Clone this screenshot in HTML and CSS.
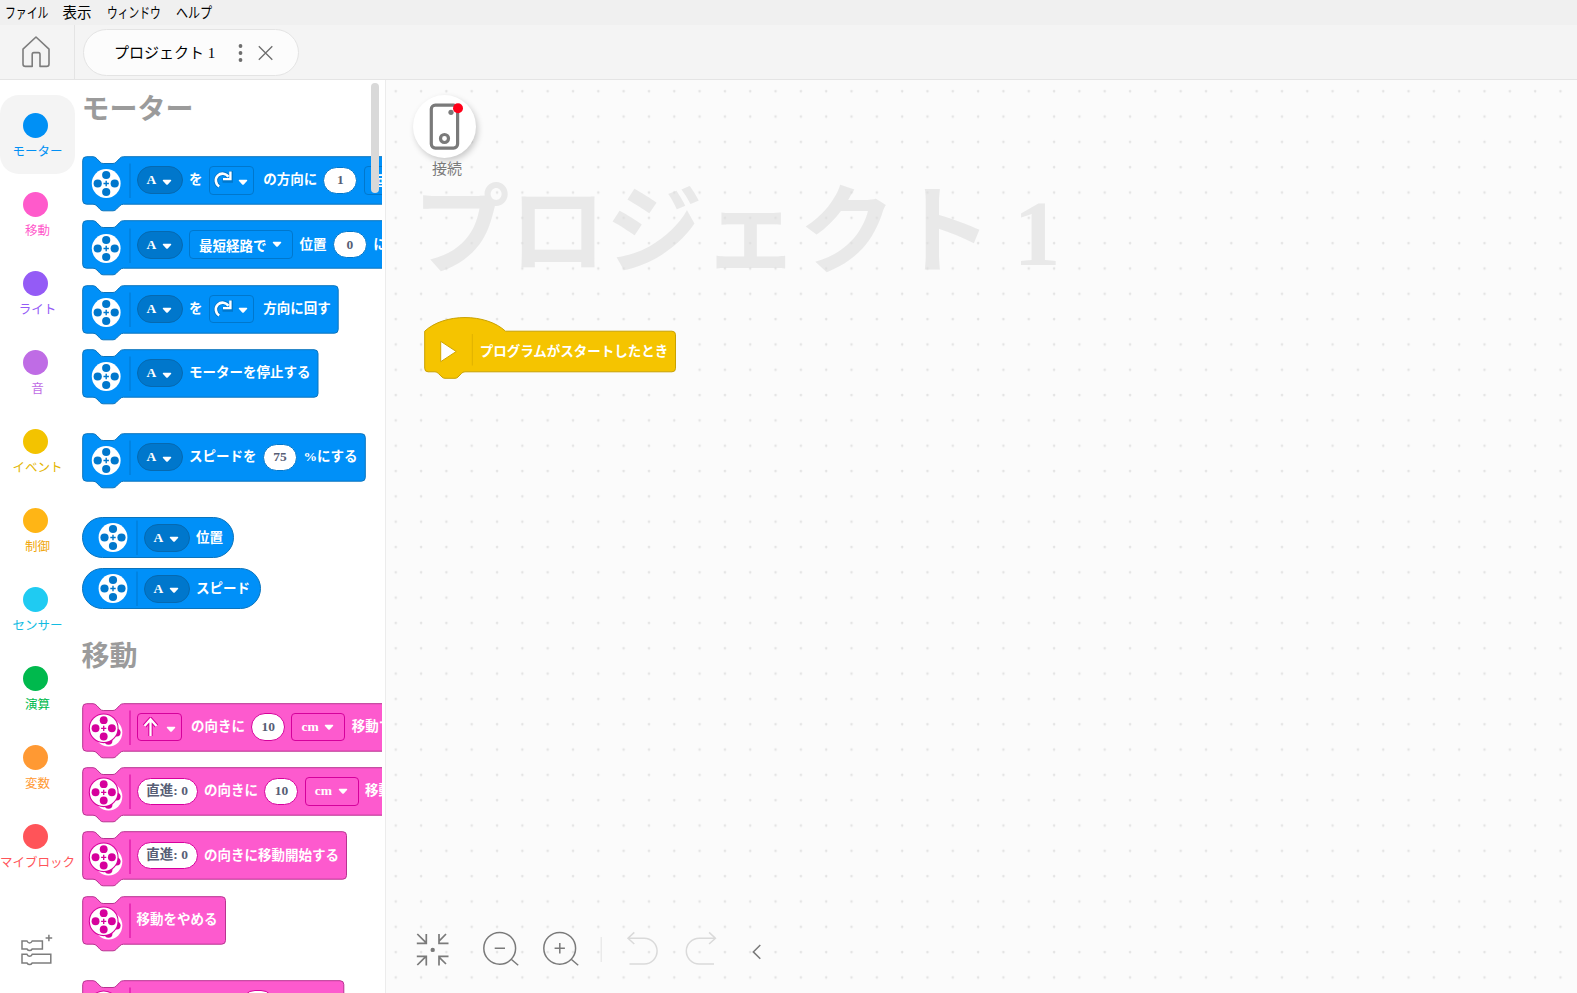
FILE: index.html
```html
<!DOCTYPE html>
<html lang="ja">
<head>
<meta charset="utf-8">
<title>プロジェクト 1</title>
<link rel="stylesheet" href="styles.css">
</head>
<body>
<svg class="defs" width="0" height="0">
  <defs>
    <g id="wheel">
      <circle r="14.4" class="disc"/>
      <circle cy="-8.5" r="4.1"/><circle cy="8.5" r="4.1"/><circle cx="-8.5" r="4.1"/><circle cx="8.5" r="4.1"/>
      <path d="M-2.7 0H2.7M0-2.7V2.7" class="cross"/>
    </g>
    <symbol id="motor" viewBox="0 0 55 48">
      <use href="#wheel" x="24.2" y="27.5"/>
      <path d="M48 7.5V42" class="sep"/>
    </symbol>
    <symbol id="motor-round" viewBox="0 0 62 41">
      <use href="#wheel" x="31" y="20.5"/>
      <path d="M55 3.5V38" class="sep"/>
    </symbol>
    <symbol id="drive" viewBox="0 0 55 48">
      <g transform="translate(26.5 29.6) scale(.96)"><use href="#wheel"/></g>
      <circle cx="21.7" cy="25.3" r="14.9" class="halo"/>
      <g transform="translate(21.7 25.3) scale(.96)"><use href="#wheel"/></g>
      <path d="M48 7.5V42" class="sep"/>
    </symbol>
    <symbol id="caret" viewBox="0 0 10 7">
      <path d="M1.3 .8H8.7Q9.8 1 9 2L6 5.3Q5 6.3 4 5.3L1 2Q.2 1 1.3.8Z" fill="#fff"/>
    </symbol>
    <symbol id="turn" viewBox="0 0 20 20">
      <path d="M6.2 16.3A6.8 6.8 0 1 1 15.4 6.8M18.3 1V10.6H9.5" class="arrow-edge"/>
      <path d="M6.2 16.3A6.8 6.8 0 1 1 15.4 6.8" fill="none" stroke="#fff" stroke-width="2.6"/>
      <path d="M18.6 1.6V10.2H10V7.9H16.2V1.6Z" fill="#fff"/>
    </symbol>
    <symbol id="up" viewBox="0 0 20 20">
      <path d="M9.5 19V2.5M3.5 9L9.5 2.2L15.5 9" class="arrow-edge"/>
      <path d="M9.5 19V2.5M3.5 9L9.5 2.2L15.5 9" fill="none" stroke="#fff" stroke-width="2.3"/>
    </symbol>
  </defs>
</svg>

<nav class="menubar">
  <span class="menu m1"><i>ファイル</i></span><span class="menu m2"><i>表示</i></span><span class="menu m3"><i>ウィンドウ</i></span><span class="menu m4"><i>ヘルプ</i></span>
</nav>

<header class="tabs">
  <div class="home">
    <svg width="30" height="34" viewBox="0 0 30 34" fill="none" stroke="#7d7d7d" stroke-width="1.6" stroke-linejoin="round"><path d="M2 14.2L15 2L28 14.2V29Q28 31.4 25.6 31.4H19V19.5Q19 17.6 17.4 17.6H12.8Q11.2 17.6 11.2 19.5V31.4H4.4Q2 31.4 2 29Z"/></svg>
  </div>
  <div class="tab">
    <span class="tab-name">プロジェクト 1</span>
    <svg width="36" height="20" viewBox="0 0 36 20"><g fill="#6e6e6e"><circle cx="3.5" cy="3" r="1.9"/><circle cx="3.5" cy="10" r="1.9"/><circle cx="3.5" cy="17" r="1.9"/></g><path d="M21.8 3.2L35.3 16.8M35.3 3.2L21.8 16.8" stroke="#6e6e6e" stroke-width="1.3"/></svg>
  </div>
</header>

<main class="main">
  <aside class="categories">
    <div class="cat active c-motor"><b></b><span>モーター</span></div>
    <div class="cat c-move"><b></b><span>移動</span></div>
    <div class="cat c-light"><b></b><span>ライト</span></div>
    <div class="cat c-sound"><b></b><span>音</span></div>
    <div class="cat c-event"><b></b><span>イベント</span></div>
    <div class="cat c-control"><b></b><span>制御</span></div>
    <div class="cat c-sensor"><b></b><span>センサー</span></div>
    <div class="cat c-ops"><b></b><span>演算</span></div>
    <div class="cat c-vars"><b></b><span>変数</span></div>
    <div class="cat c-my"><b></b><span>マイブロック</span></div>
    <svg class="extend" width="34" height="34" viewBox="0 0 34 34" fill="none" stroke="#7d7d7d" stroke-width="1.5"><path d="M2 6H7Q8 8 9.6 8Q11.2 8 12.2 6H22.4V14H12.2Q11.2 15.6 9.6 15.6Q8 15.6 7 14H2ZM2 19.3H7Q8 21.2 9.6 21.2Q11.2 21.2 12.2 19.3H30.8V28H12.2Q11.2 29.6 9.6 29.6Q8 29.6 7 28H2ZM25.6 3H32.2M28.9-.3V6.3"/></svg>
  </aside>

  <section class="palette">
    <h2 class="first">モーター</h2>
    <div class="stack motor">
      <div class="block w-long">
        <svg class="shape" width="340" height="56"><path d="M.7 4.5Q.7 .7 4.5 .7H11Q13.3.8 15 2.8L18 6Q19.3 7.5 21.2 7.5H31Q33 7.5 34.3 6L37.5 2.6Q39 .7 41.5 .7H336V48.2H41.5Q39.2 48.2 37.5 50L34.3 53.3Q33 54.8 31 54.8H21.2Q19.3 54.8 18 53.3L15 50Q13.3 48.2 11 48.2H4.5Q.7 48.2 .7 44.5Z"/></svg>
        <svg width="55" height="48"><use href="#motor"/></svg>
        <span class="pill">A<svg width="10" height="7"><use href="#caret"/></svg></span>
        <span class="txt">を</span>
        <span class="drop icon"><svg width="20" height="20"><use href="#turn"/></svg><svg width="10" height="7"><use href="#caret"/></svg></span>
        <span class="txt wide">の方向に</span>
        <span class="num">1</span>
        <span class="drop">回転<svg width="10" height="7"><use href="#caret"/></svg></span>
      </div>
      <div class="block w-long">
        <svg class="shape" width="340" height="56"><path d="M.7 4.5Q.7 .7 4.5 .7H11Q13.3.8 15 2.8L18 6Q19.3 7.5 21.2 7.5H31Q33 7.5 34.3 6L37.5 2.6Q39 .7 41.5 .7H336V48.2H41.5Q39.2 48.2 37.5 50L34.3 53.3Q33 54.8 31 54.8H21.2Q19.3 54.8 18 53.3L15 50Q13.3 48.2 11 48.2H4.5Q.7 48.2 .7 44.5Z"/></svg>
        <svg width="55" height="48"><use href="#motor"/></svg>
        <span class="pill">A<svg width="10" height="7"><use href="#caret"/></svg></span>
        <span class="drop">最短経路で<svg width="10" height="7"><use href="#caret"/></svg></span>
        <span class="txt">位置</span>
        <span class="num">0</span>
        <span class="txt">にする</span>
      </div>
      <div class="block">
        <svg class="shape" width="260" height="56"><path d="M.7 4.5Q.7 .7 4.5 .7H11Q13.3.8 15 2.8L18 6Q19.3 7.5 21.2 7.5H31Q33 7.5 34.3 6L37.5 2.6Q39 .7 41.5 .7H252.5Q256.2 .7 256.2 4.5V44.5Q256.2 48.2 252.5 48.2H41.5Q39.2 48.2 37.5 50L34.3 53.3Q33 54.8 31 54.8H21.2Q19.3 54.8 18 53.3L15 50Q13.3 48.2 11 48.2H4.5Q.7 48.2 .7 44.5Z"/></svg>
        <svg width="55" height="48"><use href="#motor"/></svg>
        <span class="pill">A<svg width="10" height="7"><use href="#caret"/></svg></span>
        <span class="txt">を</span>
        <span class="drop icon"><svg width="20" height="20"><use href="#turn"/></svg><svg width="10" height="7"><use href="#caret"/></svg></span>
        <span class="txt wide">方向に回す</span>
      </div>
      <div class="block">
        <svg class="shape" width="240" height="56"><path d="M.7 4.5Q.7 .7 4.5 .7H11Q13.3.8 15 2.8L18 6Q19.3 7.5 21.2 7.5H31Q33 7.5 34.3 6L37.5 2.6Q39 .7 41.5 .7H232.2Q236 .7 236 4.5V44.5Q236 48.2 232.2 48.2H41.5Q39.2 48.2 37.5 50L34.3 53.3Q33 54.8 31 54.8H21.2Q19.3 54.8 18 53.3L15 50Q13.3 48.2 11 48.2H4.5Q.7 48.2 .7 44.5Z"/></svg>
        <svg width="55" height="48"><use href="#motor"/></svg>
        <span class="pill">A<svg width="10" height="7"><use href="#caret"/></svg></span>
        <span class="txt">モーターを停止する</span>
      </div>
      <div class="block spaced">
        <svg class="shape" width="290" height="56"><path d="M.7 4.5Q.7 .7 4.5 .7H11Q13.3.8 15 2.8L18 6Q19.3 7.5 21.2 7.5H31Q33 7.5 34.3 6L37.5 2.6Q39 .7 41.5 .7H279.5Q283.3 .7 283.3 4.5V44.5Q283.3 48.2 279.5 48.2H41.5Q39.2 48.2 37.5 50L34.3 53.3Q33 54.8 31 54.8H21.2Q19.3 54.8 18 53.3L15 50Q13.3 48.2 11 48.2H4.5Q.7 48.2 .7 44.5Z"/></svg>
        <svg width="55" height="48"><use href="#motor"/></svg>
        <span class="pill">A<svg width="10" height="7"><use href="#caret"/></svg></span>
        <span class="txt">スピードを</span>
        <span class="num">75</span>
        <span class="txt">%にする</span>
      </div>
      <div class="reporter r1">
        <svg width="62" height="41"><use href="#motor-round"/></svg>
        <span class="pill">A<svg width="10" height="7"><use href="#caret"/></svg></span>
        <span class="txt">位置</span>
      </div>
      <div class="reporter r2">
        <svg width="62" height="41"><use href="#motor-round"/></svg>
        <span class="pill">A<svg width="10" height="7"><use href="#caret"/></svg></span>
        <span class="txt">スピード</span>
      </div>
    </div>

    <h2>移動</h2>
    <div class="stack move">
      <div class="block w-long">
        <svg class="shape" width="340" height="56"><path d="M.7 4.5Q.7 .7 4.5 .7H11Q13.3.8 15 2.8L18 6Q19.3 7.5 21.2 7.5H31Q33 7.5 34.3 6L37.5 2.6Q39 .7 41.5 .7H336V48.2H41.5Q39.2 48.2 37.5 50L34.3 53.3Q33 54.8 31 54.8H21.2Q19.3 54.8 18 53.3L15 50Q13.3 48.2 11 48.2H4.5Q.7 48.2 .7 44.5Z"/></svg>
        <svg width="55" height="48"><use href="#drive"/></svg>
        <span class="drop icon"><svg width="20" height="20"><use href="#up"/></svg><svg width="10" height="7"><use href="#caret"/></svg></span>
        <span class="txt wide">の向きに</span>
        <span class="num">10</span>
        <span class="drop">cm<svg width="10" height="7"><use href="#caret"/></svg></span>
        <span class="txt">移動する</span>
      </div>
      <div class="block w-long">
        <svg class="shape" width="340" height="56"><path d="M.7 4.5Q.7 .7 4.5 .7H11Q13.3.8 15 2.8L18 6Q19.3 7.5 21.2 7.5H31Q33 7.5 34.3 6L37.5 2.6Q39 .7 41.5 .7H336V48.2H41.5Q39.2 48.2 37.5 50L34.3 53.3Q33 54.8 31 54.8H21.2Q19.3 54.8 18 53.3L15 50Q13.3 48.2 11 48.2H4.5Q.7 48.2 .7 44.5Z"/></svg>
        <svg width="55" height="48"><use href="#drive"/></svg>
        <span class="num steer">直進: 0</span>
        <span class="txt">の向きに</span>
        <span class="num">10</span>
        <span class="drop">cm<svg width="10" height="7"><use href="#caret"/></svg></span>
        <span class="txt">移動する</span>
      </div>
      <div class="block">
        <svg class="shape" width="270" height="56"><path d="M.7 4.5Q.7 .7 4.5 .7H11Q13.3.8 15 2.8L18 6Q19.3 7.5 21.2 7.5H31Q33 7.5 34.3 6L37.5 2.6Q39 .7 41.5 .7H260.8Q264.5 .7 264.5 4.5V44.5Q264.5 48.2 260.8 48.2H41.5Q39.2 48.2 37.5 50L34.3 53.3Q33 54.8 31 54.8H21.2Q19.3 54.8 18 53.3L15 50Q13.3 48.2 11 48.2H4.5Q.7 48.2 .7 44.5Z"/></svg>
        <svg width="55" height="48"><use href="#drive"/></svg>
        <span class="num steer">直進: 0</span>
        <span class="txt">の向きに移動開始する</span>
      </div>
      <div class="block">
        <svg class="shape" width="150" height="56"><path d="M.7 4.5Q.7 .7 4.5 .7H11Q13.3.8 15 2.8L18 6Q19.3 7.5 21.2 7.5H31Q33 7.5 34.3 6L37.5 2.6Q39 .7 41.5 .7H139.7Q143.5 .7 143.5 4.5V44.5Q143.5 48.2 139.7 48.2H41.5Q39.2 48.2 37.5 50L34.3 53.3Q33 54.8 31 54.8H21.2Q19.3 54.8 18 53.3L15 50Q13.3 48.2 11 48.2H4.5Q.7 48.2 .7 44.5Z"/></svg>
        <svg width="55" height="48"><use href="#drive"/></svg>
        <span class="txt tight">移動をやめる</span>
      </div>
      <div class="block spaced">
        <svg class="shape" width="270" height="56"><path d="M.7 4.5Q.7 .7 4.5 .7H11Q13.3.8 15 2.8L18 6Q19.3 7.5 21.2 7.5H31Q33 7.5 34.3 6L37.5 2.6Q39 .7 41.5 .7H258Q261.8 .7 261.8 4.5V44.5Q261.8 48.2 258 48.2H41.5Q39.2 48.2 37.5 50L34.3 53.3Q33 54.8 31 54.8H21.2Q19.3 54.8 18 53.3L15 50Q13.3 48.2 11 48.2H4.5Q.7 48.2 .7 44.5Z"/></svg>
        <svg width="55" height="48"><use href="#drive"/></svg>
        <span class="num speed"></span>
      </div>
    </div>
    <div class="scrollbar"></div>
  </section>

  <section class="workspace">
    <div class="title">プロジェクト<span> 1</span></div>
    <svg class="grid" width="1192" height="913">
      <defs><pattern id="dots" x="-3" y="-1.5" width="25.32" height="25.32" patternUnits="userSpaceOnUse"><path d="M11.5 12.7H14M12.75 11.4V14" stroke="#dedede" stroke-width="1"/></pattern></defs>
      <rect width="1192" height="913" fill="url(#dots)"/>
    </svg>
    <div class="connect">
      <div class="hub">
        <svg width="63" height="63" viewBox="0 0 63 63" fill="none" stroke="#7a7a7a"><rect x="18.3" y="10.1" width="26.3" height="43" rx="4" stroke-width="3.2"/><circle cx="31.5" cy="43.5" r="4" stroke-width="3.2"/><circle cx="38" cy="17.3" r="2.6" fill="#7a7a7a" stroke="none"/><circle cx="45" cy="13.2" r="5" fill="#ff0019" stroke="none"/></svg>
      </div>
      <span>接続</span>
    </div>
    <div class="hat">
      <svg class="shape" width="256" height="64"><path d="M.7 14.2C20-4 62-4 81.5 14.2H248Q251.5 14.2 251.5 17.8V51.3Q251.5 54.8 248 54.8H41Q38.8 54.8 37.3 56.6L34 60Q32.8 61.3 31 61.3H21Q19.2 61.3 18 60L14.5 56.6Q13 54.8 11 54.8H4Q.7 54.8 .7 51.3Z" fill="#f5c400" stroke="#c9a100"/><path d="M48.3 17V48.5" stroke="#dfb200"/><path d="M16.7 24.3L32.2 34.5L16.7 44.7Z" fill="#fff" stroke="#d0a600"/></svg>
      <span>プログラムがスタートしたとき</span>
    </div>
    <div class="tools">
      <svg width="350" height="36" viewBox="0 0 350 36" fill="none" stroke="#7a7a7a" stroke-width="1.5">
        <path d="M2.3 4L11 12.7M1.8 13.3H11.3V4M31 4L24.3 10.8M24 4V13.3H33.5M2.3 35L11 26.3M1.8 26.4H11.3V35.5M31 34L24.3 27.3M24 35.5V26.4H33.5" class="fit"/>
        <circle cx="17.7" cy="19.9" r="2.2" fill="#7a7a7a" stroke="none"/>
        <circle cx="84.7" cy="18.3" r="15.9"/><path d="M79.7 18.3H90M96.2 29.3L103.2 35.3"/>
        <circle cx="144.7" cy="18.3" r="15.9"/><path d="M139.6 18.3H149.9M144.8 13.1V23.5M156.2 29.3L163.2 35.3"/>
        <path d="M186.2 7V32" stroke="#e2e2e2" stroke-width="1"/>
        <path d="M213 8.2H229.2A12.9 12.9 0 0 1 229.2 34H214.5M219.3 2.4L213 8.2L219.3 14M300.4 8.2H284.2A12.9 12.9 0 0 0 284.2 34H299M294.1 2.4L300.4 8.2L294.1 14" stroke="#dadada"/>
        <path d="M345.3 15L338.3 21.9L345.3 28.8"/>
      </svg>
    </div>
  </section>
</main>
</body>
</html>
```

FILE: styles.css
```css
* { box-sizing: border-box; }

body {
  margin: 0;
  width: 1577px;
  height: 993px;
  overflow: hidden;
  display: flex;
  flex-direction: column;
  background: #fff;
  font-family: "Liberation Serif", "Noto Sans CJK JP", sans-serif;
}

svg { display: block; flex: none; }
.defs { position: absolute; }

/* Menu bar */
.menubar {
  height: 25px;
  flex: none;
  display: flex;
  align-items: center;
  background: #f0f0f0;
  font: 14.5px/24px "Noto Sans CJK JP", sans-serif;
  color: #000;
  padding: 0 0 1px 4.5px;
}
.menu { white-space: nowrap; flex: none; }
.menu i { display: inline-block; font-style: normal; transform-origin: 0 50%; }
.m1 { width: 58px; }
.m2 { width: 44px; }
.m3 { width: 69.5px; }
.m1 i { transform: scaleX(.75); }
.m3 i { transform: scaleX(.74); }
.m4 i { transform: scaleX(.83); }

/* Project tabs */
.tabs {
  height: 55px;
  flex: none;
  display: flex;
  align-items: center;
  background: #f4f4f4;
  border-bottom: 1px solid #e4e4e4;
}
.home {
  width: 75px;
  height: 54px;
  display: flex;
  align-items: center;
  padding-left: 20.5px;
  border-right: 1px solid #e4e4e4;
}
.tab {
  width: 216px;
  height: 47px;
  margin-left: 8px;
  padding: 1px 0 0 30px;
  display: flex;
  align-items: center;
  background: #fcfcfc;
  border: 1px solid #e4e4e4;
  border-radius: 24px;
}
.tab-name { width: 122.5px; font-size: 15px; line-height: 20px; white-space: nowrap; }

.main { flex: 1; min-height: 0; display: flex; }

/* Category rail */
.categories {
  width: 75px;
  flex: none;
  padding-top: 15px;
  display: flex;
  flex-direction: column;
}
.cat {
  height: 79px;
  flex: none;
  padding-top: 18px;
  display: flex;
  flex-direction: column;
  align-items: center;
  font: 12.5px/18px "Noto Sans CJK JP", sans-serif;
  white-space: nowrap;
}
.cat b { width: 25px; height: 25px; border-radius: 50%; background: currentColor; margin: 0 4px 4px 0; }
.cat.active { background: #f4f4f4; border-radius: 19px; }
.c-motor { color: #0090f5; }
.c-move { color: #ff5acb; }
.c-light { color: #945bf6; }
.c-sound { color: #bf6ce5; }
.c-event { color: #f3c300; }
.c-event span { color: #e3b500; }
.c-control { color: #ffb515; }
.c-control span { color: #f0a60a; }
.c-sensor { color: #1fcbf2; }
.c-sensor span { color: #12bce2; }
.c-ops { color: #00b94d; }
.c-vars { color: #ff9933; }
.c-my { color: #ff5459; }
.extend { margin: 49.5px 0 0 20px; overflow: visible; }

/* Block palette */
.palette {
  position: relative;
  width: 310px;
  flex: none;
  padding-left: 6.6px;
  overflow: hidden;
  border-right: 3px solid #fff;
}
.palette h2 {
  margin: 25px 0 28.8px 0;
  font: 700 28px/40px "Noto Sans CJK JP", sans-serif;
  color: #9b9b9b;
}
.palette h2.first { margin: 7px 0 29.2px 0; }
.scrollbar {
  position: absolute;
  right: 3px;
  top: 3px;
  width: 8px;
  height: 110px;
  border-radius: 4px;
  background: #d9d9d9;
}

.motor { --fill: #0090f8; --dark: #0077cc; --edge: #0b74bd; }
.move { --fill: #fd5ace; --dark: #d6009c; --edge: #b83290; }
.motor use, .move use { fill: var(--dark); }
.disc { fill: #fff; }
.halo { fill: var(--dark); }
.cross { stroke: var(--dark); stroke-width: 1.4; }
.sep { stroke: var(--dark); stroke-width: 1; }
.arrow-edge { fill: none; stroke: var(--dark); stroke-width: 4.4; }

.block, .reporter {
  position: relative;
  display: flex;
  align-items: center;
  white-space: nowrap;
  color: #fff;
  font-weight: 700;
  font-size: 13.5px;
}
.block { height: 48.25px; margin-bottom: 16px; }
.block.spaced { margin-top: 36px; margin-bottom: 36px; }
.w-long { width: 340px; }
.shape { position: absolute; left: 0; top: 0; }
.block .shape path { fill: var(--fill); stroke: var(--edge); stroke-width: 1; }
.block > *, .reporter > * { position: relative; flex: none; }
.block > .shape { position: absolute; }

.reporter {
  height: 41px;
  margin-bottom: 9.7px;
  border: 1px solid var(--edge);
  border-radius: 21px;
  background: var(--fill);
}
.reporter > svg { margin-left: -1px; }
.r1 { width: 152px; }
.r2 { width: 179px; }

.pill {
  width: 46px;
  height: 28px;
  padding-left: 9px;
  display: flex;
  align-items: center;
  gap: 5.5px;
  border: 1px solid #0669b0;
  border-radius: 14px;
  background: var(--dark);
}
.pill svg, .drop.icon svg + svg { margin-top: 4px; }
.txt { margin-left: 6.5px; line-height: 20px; }
.txt.wide { margin-left: 9.3px; }
.txt.tight { margin-left: 0; }
.txt + .drop, .txt + .num { margin-left: 6.3px; }
.drop {
  height: 28.5px;
  padding: 0 10px 0 9px;
  margin-left: 6.3px;
  display: flex;
  align-items: center;
  gap: 5.6px;
  border: 1px solid var(--dark);
  border-radius: 4px;
}
svg + .drop { margin-left: 0; }
.drop.icon { width: 45px; padding: 0 0 0 3px; gap: 5px; }
.num {
  width: 34px;
  height: 27.5px;
  display: flex;
  align-items: center;
  justify-content: center;
  border: 1px solid var(--dark);
  border-radius: 14px;
  background: #fff;
  color: #575e75;
}
.num.steer { width: 61px; font-weight: 600; line-height: 20px; padding-bottom: 1px; }
.num.speed { margin-left: 104px; }

/* Workspace */
.workspace {
  position: relative;
  flex: 1;
  border-left: 1px solid #ececec;
  background: #fbfbfb;
  overflow: hidden;
}
.grid { position: absolute; left: 0; top: 0; }
.title {
  position: absolute;
  left: 27px;
  top: 83px;
  font-weight: 700;
  font-size: 96.5px;
  line-height: 140px;
  white-space: nowrap;
  color: #e9e9e9;
}
.title span { font-size: 94px; margin-left: -2px; }
.connect {
  position: absolute;
  left: 27px;
  top: 15px;
  width: 66px;
  display: flex;
  flex-direction: column;
  color: #7a7a7a;
  font: 15px/20px "Noto Sans CJK JP", sans-serif;
}
.connect span { margin: 0 0 0 19px; }
.hub {
  width: 63px;
  height: 63px;
  border-radius: 50%;
  background: #fff;
  box-shadow: 2px 3px 6px rgba(0, 0, 0, .2);
}
.hat {
  position: absolute;
  left: 37.7px;
  top: 237px;
  width: 253px;
  height: 62px;
  display: flex;
  align-items: center;
  padding: 4px 0 0 56px;
  color: #fff;
  font-weight: 700;
  font-size: 13.5px;
  white-space: nowrap;
}
.hat span { position: relative; }
.tools { position: absolute; left: 29.3px; top: 850.4px; }
.fit { stroke-width: 1.7; }
```
